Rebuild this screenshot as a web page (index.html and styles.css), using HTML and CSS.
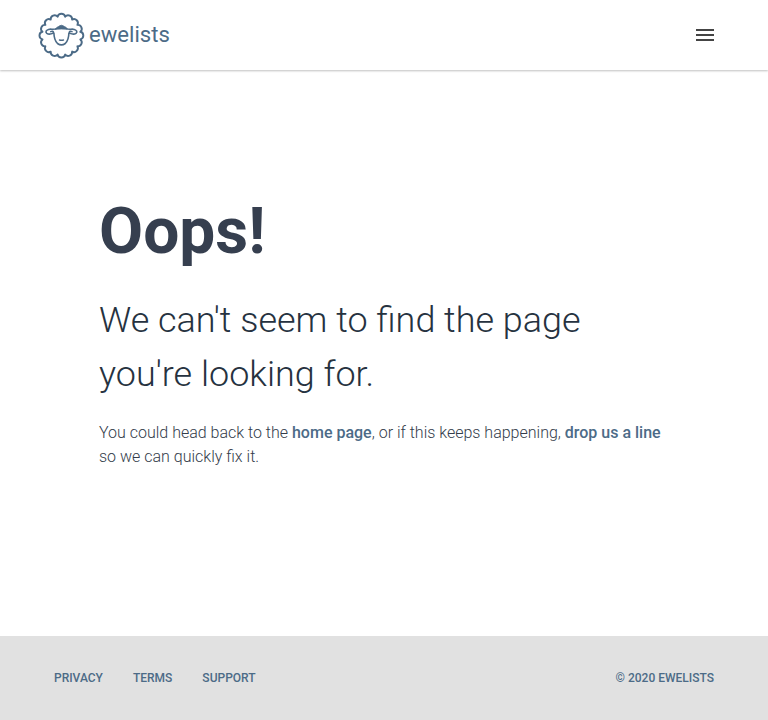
FILE: index.html
```html
<!DOCTYPE html>
<html lang="en">
<head>
<meta charset="utf-8">
<title>Ewelists</title>
<link rel="stylesheet" href="styles.css">
</head>
<body>
<header class="header">
  <a class="brand">
    <svg class="logo" viewBox="0 0 46 46" fill="none" stroke="currentColor" stroke-width="1.9" stroke-linecap="round" stroke-linejoin="round">
      <path d="M19.6 4.7A3.9 3.9 0 0 1 27.2 4.7A3.9 3.9 0 0 1 34.1 7.6A3.9 3.9 0 0 1 39.4 12.9A3.9 3.9 0 0 1 42.3 19.8A3.9 3.9 0 0 1 42.3 27.4A3.9 3.9 0 0 1 39.4 34.3A3.9 3.9 0 0 1 34.1 39.6A3.9 3.9 0 0 1 27.2 42.5A3.9 3.9 0 0 1 19.6 42.5A3.9 3.9 0 0 1 12.7 39.6A3.9 3.9 0 0 1 7.4 34.3A3.9 3.9 0 0 1 4.5 27.4A3.9 3.9 0 0 1 4.5 19.8A3.9 3.9 0 0 1 7.4 12.9A3.9 3.9 0 0 1 12.7 7.6A3.9 3.9 0 0 1 19.6 4.7Z"/>
      <path stroke-width="1.6" d="M18.5 16.6C15.5 18 13 16.6 10.500 17.400C8 18.200 7.200 20 8.800 21.300C10.500 22.500 14 22.300 15.400 20.700C15.700 19.400 14.200 18.800 12.800 19.600M28.300 16.600C31.300 18 33.800 16.600 36.300 17.400C38.800 18.200 39.600 20 38 21.300C36.300 22.500 32.800 22.300 31.400 20.700C31.100 19.400 32.600 18.800 34 19.600M15.900 21C16 25 17.500 29.500 19.500 31.500Q23.400 34.300 27.300 31.500C29.300 29.500 30.800 25 30.900 21M21.600 28Q23.500 28.600 25.400 28"/>
      <path fill="currentColor" stroke-width=".8" d="M17.500 17.200C18.500 14.800 20.500 15 21.200 14Q23.400 12.500 25.600 14C26.500 15 28.500 14.800 29.300 17.200Q23.400 16.800 17.500 17.200Z"/>
    </svg>
    <span class="brand-name">ewelists</span>
  </a>
  <button class="menu" aria-label="Menu"><svg viewBox="0 0 24 24"><path d="M3 18h18v-2H3v2zm0-5h18v-2H3v2zm0-7v2h18V6H3z"/></svg></button>
</header>
<main class="main">
  <h1 class="title">Oops!</h1>
  <h3 class="subtitle">We can't seem to find the page you're looking for.</h3>
  <p class="text">You could head back to the <a>home page</a>, or if this keeps happening, <a>drop us a line</a> so we can quickly fix it.</p>
</main>
<footer class="footer">
  <nav class="links"><a>Privacy</a><a>Terms</a><a>Support</a></nav>
  <span>© 2020 Ewelists</span>
</footer>
</body>
</html>
```
FILE: styles.css
```css
* { box-sizing: border-box; }
body { margin: 0; height: 720px; display: flex; flex-direction: column; font-family: Roboto, sans-serif; font-weight: 300; color: #3c4858; background: #fff; }
.header { height: 70px; flex: none; display: flex; align-items: center; justify-content: space-between; padding: 0 51px 0 38px; box-shadow: 0 1px 2px rgba(0,0,0,.25); }
.brand { display: flex; align-items: center; color: #4c6b87; }
.logo { width: 46px; height: 46px; margin-right: 5px; overflow: visible; }
.brand-name { font-size: 22.1px; font-weight: 400; padding-bottom: 2px; }
.menu { border: 0; padding: 0; background: none; width: 24px; height: 24px; }
.menu svg { display: block; width: 24px; height: 24px; fill: #444; }
.main { flex: 1; padding: 123px 99px 0; }
.title { margin: 0; font-size: 64px; line-height: 77px; font-weight: 700; color: #363f4f; }
.subtitle { margin: 23px 0 20px; font-size: 35.95px; line-height: 54px; font-weight: 300; color: #263240; }
.text { margin: 0; font-size: 16px; line-height: 24px; color: #333c4a; }
.text a { font-weight: 500; color: #4c6b87; }
.footer { height: 84px; flex: none; background: #e1e1e1; display: flex; align-items: center; justify-content: space-between; padding: 0 54px; font-size: 12px; font-weight: 500; text-transform: uppercase; color: #4c6b87; }
.links { display: flex; gap: 30px; }
```
